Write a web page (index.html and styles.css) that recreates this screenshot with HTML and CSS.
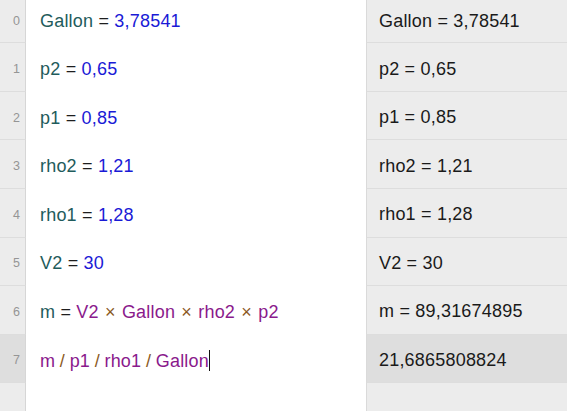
FILE: index.html
```html
<!DOCTYPE html>
<html>
<head>
<meta charset="utf-8">
<link rel="stylesheet" href="styles.css">
</head>
<body>
<div class="sheet">
  <div class="row first">
    <div class="num">0</div>
    <div class="code"><span class="line"><span class="var">Gallon</span> <span class="op">=</span> <span class="lit">3,78541</span></span></div>
    <div class="res"><span class="line">Gallon = 3,78541</span></div>
  </div>
  <div class="row">
    <div class="num">1</div>
    <div class="code"><span class="line"><span class="var">p2</span> <span class="op">=</span> <span class="lit">0,65</span></span></div>
    <div class="res"><span class="line">p2 = 0,65</span></div>
  </div>
  <div class="row">
    <div class="num">2</div>
    <div class="code"><span class="line"><span class="var">p1</span> <span class="op">=</span> <span class="lit">0,85</span></span></div>
    <div class="res"><span class="line">p1 = 0,85</span></div>
  </div>
  <div class="row">
    <div class="num">3</div>
    <div class="code"><span class="line"><span class="var">rho2</span> <span class="op">=</span> <span class="lit">1,21</span></span></div>
    <div class="res"><span class="line">rho2 = 1,21</span></div>
  </div>
  <div class="row">
    <div class="num">4</div>
    <div class="code"><span class="line"><span class="var">rho1</span> <span class="op">=</span> <span class="lit">1,28</span></span></div>
    <div class="res"><span class="line">rho1 = 1,28</span></div>
  </div>
  <div class="row">
    <div class="num">5</div>
    <div class="code"><span class="line"><span class="var">V2</span> <span class="op">=</span> <span class="lit">30</span></span></div>
    <div class="res"><span class="line">V2 = 30</span></div>
  </div>
  <div class="row">
    <div class="num">6</div>
    <div class="code"><span class="line"><span class="var">m</span> <span class="op">=</span> <span class="ref">V2</span> <span class="mul times">×</span> <span class="ref">Gallon</span> <span class="mul times">×</span> <span class="ref">rho2</span> <span class="mul times">×</span> <span class="ref">p2</span></span></div>
    <div class="res"><span class="line">m = 89,31674895</span></div>
  </div>
  <div class="row active">
    <div class="num">7</div>
    <div class="code"><span class="line"><span class="ref">m</span> <span class="mul slash">/</span> <span class="ref">p1</span> <span class="mul slash">/</span> <span class="ref">rho1</span> <span class="mul slash">/</span> <span class="ref">Gallon</span><span class="caret"></span></span></div>
    <div class="res"><span class="line">21,6865808824</span></div>
  </div>
  <div class="row filler">
    <div class="num"></div>
    <div class="code"></div>
    <div class="res"></div>
  </div>
</div>
</body>
</html>
```

FILE: styles.css
```css
html, body {
  margin: 0;
  padding: 0;
  height: 411px;
  overflow: hidden;
  background: #ffffff;
}

.sheet {
  display: flex;
  flex-direction: column;
  height: 411px;
  font-family: "Liberation Sans", Arial, sans-serif;
  font-size: 18px;
  letter-spacing: 0.2px;
}

.row {
  display: flex;
  height: 48.57px;
  flex: none;
}

.row.first {
  height: 43.3px;
}

.row.filler {
  flex: 1;
}

.num {
  width: 26px;
  flex: none;
  box-sizing: border-box;
  border-right: 1px solid #d6d6d6;
  border-bottom: 1px solid #dddddd;
  background: #ececec;
  color: #959595;
  font-size: 12.5px;
  letter-spacing: 0;
  display: flex;
  align-items: center;
  justify-content: flex-end;
  padding-right: 5px;
  padding-top: 4px;
}

.code {
  width: 340px;
  flex: none;
  box-sizing: border-box;
  padding-left: 14px;
  padding-top: 4px;
  display: flex;
  align-items: center;
  color: #1e1e1e;
  background: #ffffff;
}

.line {
  white-space: pre;
}

.res {
  flex: 1;
  box-sizing: border-box;
  border-left: 1px solid #dadada;
  border-bottom: 1px solid #dddddd;
  background: #ececec;
  padding-left: 12px;
  padding-top: 4px;
  display: flex;
  align-items: center;
  color: #1a1a1a;
}

.row.first .num,
.row.first .code,
.row.first .res {
  padding-top: 0;
}

.row.active .num,
.row.active .res {
  background: #dedede;
}

.row.filler .num,
.row.filler .res {
  border-bottom: none;
}

.var { color: #1f5c5c; }
.op { color: #1e1e1e; }
.lit { color: #1a1ad6; }
.ref { color: #8a1a8c; }
.mul { color: #8b5a1e; }

.times { margin: 0 1px; }
.slash { margin: 0 -0.6px; }

.caret {
  display: inline-block;
  width: 1px;
  height: 21px;
  background: #111111;
  vertical-align: -4px;
}
```
